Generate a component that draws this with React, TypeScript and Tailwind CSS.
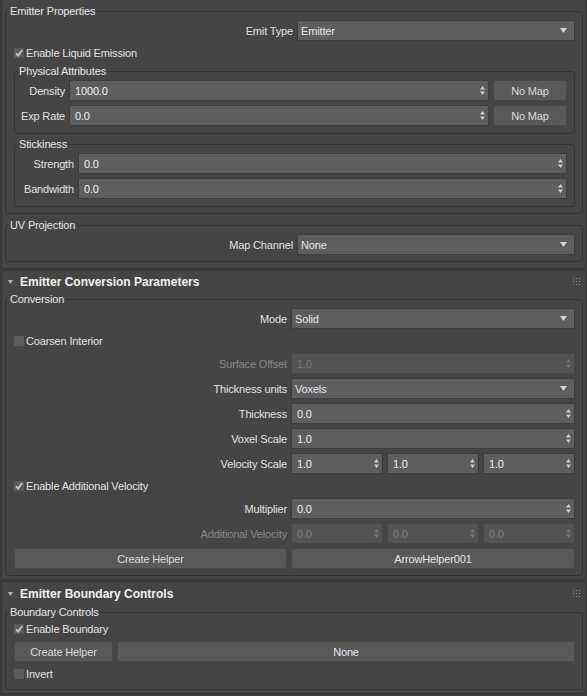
import type { ReactNode } from "react";

// Dark "rollout" panel, in the style of a 3D app's command panel.

function SpinArrows({ dim }: { dim?: boolean }) {
  return (
    <svg width="5" height="9" viewBox="0 0 5 9" className={dim ? "fill-[#747474]" : "fill-[#cfcfcf]"}>
      <polygon points="2.5,0 5,3.5 0,3.5" />
      <polygon points="0,5.5 5,5.5 2.5,9" />
    </svg>
  );
}

function Spinner({ value, disabled }: { value: string; disabled?: boolean }) {
  return (
    <div
      className={`flex h-[21px] min-w-0 flex-1 items-center border pl-[5px] pr-[3px] ${
        disabled
          ? "border-[#474747] bg-[#535353] text-[#7c7c7c]"
          : "border-[#3c3c3c] bg-[#5e5e5e] text-[#f2f2f2]"
      }`}
    >
      <span className="flex-1">{value}</span>
      <SpinArrows dim={disabled} />
    </div>
  );
}

function Dropdown({ value }: { value: string }) {
  return (
    <div className="flex h-[21px] flex-1 items-center border border-[#3c3c3c] bg-[#5e5e5e] pl-[3px] pr-[7px] text-[#e3e7ee]">
      <span className="flex-1">{value}</span>
      <svg width="7" height="5" viewBox="0 0 7 5" className="fill-[#d4d4d4]">
        <polygon points="0,0 7,0 3.5,5" />
      </svg>
    </div>
  );
}

function Button({ children, className = "" }: { children: ReactNode; className?: string }) {
  return (
    <div
      className={`flex h-[21px] items-center justify-center rounded-[3px] border border-[#484848] bg-[#595959] text-[#dcdcdc] ${className}`}
    >
      {children}
    </div>
  );
}

function Check({ label, checked }: { label: string; checked?: boolean }) {
  return (
    <div className="flex h-[16px] items-center gap-[2px]">
      <span className="flex h-[10px] w-[10px] items-center justify-center bg-[#5b5b5b]">
        {checked && (
          <svg width="8" height="8" viewBox="0 0 8 8">
            <path d="M1 4.2 L3.1 6.6 L7.2 1" fill="none" stroke="#cfcfcf" strokeWidth="1.7" />
          </svg>
        )}
      </span>
      <span className="text-[#e2e2e2]">{label}</span>
    </div>
  );
}

function Group({
  label,
  pad,
  className = "",
  children,
}: {
  label: string;
  pad: string;
  className?: string;
  children: ReactNode;
}) {
  return (
    <fieldset className={`min-w-0 rounded-[3px] border border-[#343434] ${className}`}>
      <legend className="ml-[3px] px-[1px] leading-[14px] text-[#e6e6e6]">{label}</legend>
      <div className={pad}>{children}</div>
    </fieldset>
  );
}

function Row({
  label,
  disabled,
  field,
  children,
}: {
  label: string;
  disabled?: boolean;
  field: string;
  children: ReactNode;
}) {
  return (
    <div className="flex h-[21px] items-center gap-[4px]">
      <span className={`flex-1 text-right ${disabled ? "text-[#888888]" : "text-[#e2e2e2]"}`}>{label}</span>
      <div className={`flex gap-[4px] ${field}`}>{children}</div>
    </div>
  );
}

function Grip() {
  return (
    <svg width="7" height="7" viewBox="0 0 7 7" className="fill-[#8c8c8c]">
      {[0, 3, 6].map((y) =>
        [0, 3, 6].map((x) => <rect key={`${x}-${y}`} x={x} y={y} width="1" height="1" />),
      )}
    </svg>
  );
}

function RolloutHeader({ title, h }: { title: string; h: string }) {
  return (
    <div className={`flex items-center pl-[3px] pr-[3px] ${h}`}>
      <svg width="5" height="4" viewBox="0 0 5 4" className="fill-[#b8b8b8]">
        <polygon points="0,0 5,0 2.5,4" />
      </svg>
      <span className="ml-[7px] flex-1 text-[12px] font-bold tracking-normal text-[#f2f2f2]">{title}</span>
      <Grip />
    </div>
  );
}

function Rollout({ className = "", children }: { className?: string; children: ReactNode }) {
  return (
    <div className={`rounded-[2px] border border-[#363636] bg-[#454545] pl-[3px] pr-[2px] ${className}`}>
      {children}
    </div>
  );
}

function SideLabel({ text, w }: { text: string; w: string }) {
  return <span className={`flex shrink-0 justify-end whitespace-nowrap text-[#e2e2e2] ${w}`}>{text}</span>;
}

export default function App() {
  return (
    <div className="flex h-[696px] w-[587px] flex-col gap-px overflow-hidden bg-[#3d3d3d] px-px text-[11px] leading-[14px] tracking-[-0.15px] font-['Liberation_Sans',Arial,sans-serif]">
      {/* rollout whose header is scrolled off the top */}
      <Rollout className="-mt-px pt-[4px] pb-[6px]">
        <Group label="Emitter Properties" pad="pl-[8px] pr-[7px] pt-[2px] pb-[6px]">
          <Row label="Emit Type" field="w-[278px]">
            <Dropdown value="Emitter" />
          </Row>
          <div className="mt-[4px]">
            <Check label="Enable Liquid Emission" checked />
          </div>
          <Group label="Physical Attributes" pad="pl-[6px] pr-[7px] pt-[2px] pb-[7px]" className="mt-[3px]">
            {[
              ["Density", "1000.0"],
              ["Exp Rate", "0.0"],
            ].map(([l, v], i) => (
              <div key={l} className={`flex h-[21px] items-center gap-[4px] ${i ? "mt-[4px]" : ""}`}>
                <SideLabel text={l} w="w-[44px]" />
                <Spinner value={v} />
                <Button className="w-[74px]">No Map</Button>
              </div>
            ))}
          </Group>
          <Group label="Stickiness" pad="pl-[6px] pr-[7px] pt-[2px] pb-[7px]" className="mt-[3px]">
            {["Strength", "Bandwidth"].map((l, i) => (
              <div key={l} className={`flex h-[21px] items-center gap-[4px] ${i ? "mt-[4px]" : ""}`}>
                <SideLabel text={l} w="w-[53px]" />
                <Spinner value="0.0" />
              </div>
            ))}
          </Group>
        </Group>
        <Group label="UV Projection" pad="pl-[8px] pr-[7px] pt-[2px] pb-[6px]" className="mt-[4px]">
          <Row label="Map Channel" field="w-[278px]">
            <Dropdown value="None" />
          </Row>
        </Group>
      </Rollout>

      <Rollout className="pb-[3px]">
        <RolloutHeader title="Emitter Conversion Parameters" h="h-[21px]" />
        <Group label="Conversion" pad="pl-[8px] pr-[7px] pt-[2px] pb-[6px]">
          <Row label="Mode" field="w-[284px]">
            <Dropdown value="Solid" />
          </Row>
          <div className="mt-[4px]">
            <Check label="Coarsen Interior" />
          </div>
          <div className="mt-[4px] flex flex-col gap-[4px]">
            <Row label="Surface Offset" disabled field="w-[284px]">
              <Spinner value="1.0" disabled />
            </Row>
            <Row label="Thickness units" field="w-[284px]">
              <Dropdown value="Voxels" />
            </Row>
            <Row label="Thickness" field="w-[284px]">
              <Spinner value="0.0" />
            </Row>
            <Row label="Voxel Scale" field="w-[284px]">
              <Spinner value="1.0" />
            </Row>
            <Row label="Velocity Scale" field="w-[284px]">
              <Spinner value="1.0" />
              <Spinner value="1.0" />
              <Spinner value="1.0" />
            </Row>
            <Check label="Enable Additional Velocity" checked />
            <Row label="Multiplier" field="w-[284px]">
              <Spinner value="0.0" />
            </Row>
            <Row label="Additional Velocity" disabled field="w-[284px]">
              <Spinner value="0.0" disabled />
              <Spinner value="0.0" disabled />
              <Spinner value="0.0" disabled />
            </Row>
            <div className="flex gap-[4px]">
              <Button className="flex-1">Create Helper</Button>
              <Button className="w-[284px] text-[#e6e6e6]">ArrowHelper001</Button>
            </div>
          </div>
        </Group>
      </Rollout>

      <Rollout className="pb-[3px]">
        <RolloutHeader title="Emitter Boundary Controls" h="h-[23px]" />
        <Group label="Boundary Controls" pad="pl-[8px] pr-[7px] pt-[2px] pb-[7px]">
          <Check label="Enable Boundary" checked />
          <div className="mt-[4px] flex gap-[4px]">
            <Button className="w-[99px]">Create Helper</Button>
            <Button className="flex-1 bg-[#5d5d5d] text-[#e3e7ee]">None</Button>
          </div>
          <div className="mt-[4px]">
            <Check label="Invert" />
          </div>
        </Group>
      </Rollout>
    </div>
  );
}
